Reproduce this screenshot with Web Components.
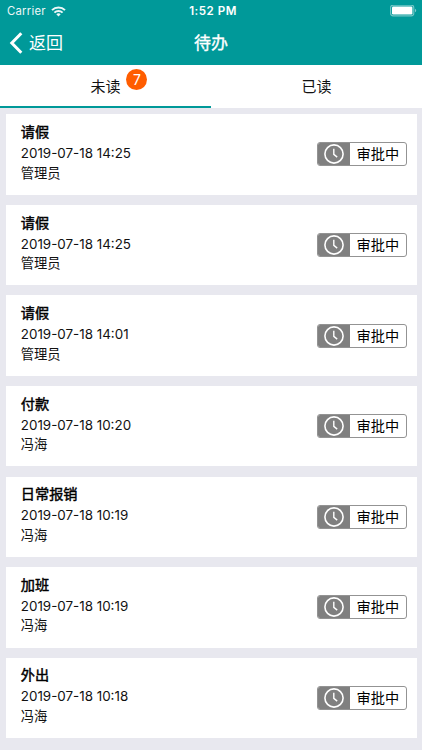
<!DOCTYPE html>
<html lang="zh-CN">
<head>
<meta charset="utf-8">
<meta name="viewport" content="width=device-width, initial-scale=1">
<title>待办</title>
<style>
  body {
    margin: 0;
    background: #e8e8ef;
    font-family: Inter, "Noto Sans CJK SC", sans-serif;
    color: #111;
    overflow: hidden;
  }
</style>
</head>
<body>
<todo-app>
  <status-bar carrier="Carrier" time="1:52 PM"></status-bar>
  <nav-bar back="返回">待办</nav-bar>
  <tab-bar>
    <tab-item active badge="7">未读</tab-item>
    <tab-item>已读</tab-item>
  </tab-bar>
  <todo-list></todo-list>
</todo-app>

<script>
(function() {
  const ITEMS = [
    { title: '请假', date: '2019-07-18 14:25', user: '管理员' },
    { title: '请假', date: '2019-07-18 14:25', user: '管理员' },
    { title: '请假', date: '2019-07-18 14:01', user: '管理员' },
    { title: '付款', date: '2019-07-18 10:20', user: '冯海' },
    { title: '日常报销', date: '2019-07-18 10:19', user: '冯海' },
    { title: '加班', date: '2019-07-18 10:19', user: '冯海' },
    { title: '外出', date: '2019-07-18 10:18', user: '冯海' },
  ];

  class BaseElement extends HTMLElement {
    constructor() {
      super();
      this.attachShadow({ mode: 'open' });
    }

    connectedCallback() {
      this.shadowRoot.innerHTML = this.template();
    }
  }

  class TodoApp extends BaseElement {
    template() {
      return `
        <style>
          :host { display: flex; flex-direction: column; height: 750px; overflow: hidden; }
        </style>
        <slot></slot>
      `;
    }
  }

  class StatusBar extends BaseElement {
    template() {
      return `
        <style>
          :host {
            display: grid;
            grid-template-columns: 1fr auto 1fr;
            align-items: center;
            box-sizing: border-box;
            height: 22px;
            padding: 0 5px 0 7px;
            background: #099;
            color: #fff;
            font-size: 11.3px;
            line-height: 22px;
          }
          .left { display: flex; align-items: center; gap: 5px; opacity: .93; letter-spacing: .25px; }
          .time { font-weight: 600; font-size: 11.6px; letter-spacing: .5px; padding-left: 2px; }
          .battery { justify-self: end; }
          svg { display: block; }
        </style>
        <div class="left">
          <span>${this.getAttribute('carrier')}</span>
          <svg width="15" height="11" viewBox="0 0 15 11" fill="none" stroke="#fff" stroke-width="2">
            <path d="M1 4.1a9.2 9.2 0 0 1 13 0"/>
            <path d="M3.4 6.6a5.8 5.8 0 0 1 8.2 0"/>
            <path d="M7.5 10.6 5.3 8.3a3.1 3.1 0 0 1 4.4 0z" fill="#fff" stroke="none"/>
          </svg>
        </div>
        <div class="time">${this.getAttribute('time')}</div>
        <svg class="battery" width="27" height="12" viewBox="0 0 27 12">
          <rect x=".6" y=".1" width="23.2" height="10.8" rx="2.6" fill="none" stroke="#fff" stroke-opacity=".45" stroke-width="1.1"/>
          <rect x="2" y="1.5" width="20.4" height="8" rx="1.2" fill="#fff"/>
          <path d="M25 3.7a2 2 0 0 1 0 3.6z" fill="#fff" fill-opacity=".5"/>
        </svg>
      `;
    }
  }

  class NavBar extends BaseElement {
    template() {
      return `
        <style>
          :host {
            display: grid;
            grid-template-columns: 1fr auto 1fr;
            align-items: center;
            box-sizing: border-box;
            height: 43px;
            padding: 0 9px 2px;
            background: #099;
            color: #fff;
            font-size: 17px;
            line-height: 24px;
          }
          .back { display: flex; align-items: center; gap: 6px; font-weight: 400; }
          .title { font-weight: 400; -webkit-text-stroke: .35px #fff; }
          svg { display: block; }
        </style>
        <div class="back">
          <svg width="14" height="22" viewBox="0 0 14 22" fill="none" stroke="#fff" stroke-width="3">
            <path d="M12.3 1.2 2.8 11l9.5 9.8"/>
          </svg>
          <span>${this.getAttribute('back')}</span>
        </div>
        <div class="title"><slot></slot></div>
      `;
    }
  }

  class TabBar extends BaseElement {
    template() {
      return `
        <style>
          :host { display: grid; grid-template-columns: 1fr 1fr; height: 43px; background: #fff; }
        </style>
        <slot></slot>
      `;
    }
  }

  class TabItem extends BaseElement {
    template() {
      const badge = this.getAttribute('badge');
      return `
        <style>
          :host {
            display: flex;
            align-items: center;
            justify-content: center;
            box-sizing: border-box;
            border-bottom: 2px solid transparent;
            padding-top: 3px;
            font-size: 15px;
            line-height: 22px;
          }
          :host([active]) { border-color: #099; }
          .label { position: relative; }
          .badge {
            position: absolute;
            left: 36px;
            top: -7px;
            width: 21px;
            height: 21px;
            border-radius: 50%;
            background: #ff5d00;
            color: #fff;
            font-size: 14px;
            line-height: 21px;
            text-align: center;
          }
        </style>
        <div class="label"><slot></slot>${badge ? `<span class="badge">${badge}</span>` : ''}</div>
      `;
    }
  }

  class StatusTag extends BaseElement {
    template() {
      return `
        <style>
          :host {
            display: flex;
            box-sizing: border-box;
            width: 90px;
            height: 24px;
            border: 1px solid #939393;
            border-radius: 3px;
            overflow: hidden;
            font-size: 14.2px;
            line-height: 22px;
            color: #000;
          }
          .icon {
            display: flex;
            align-items: center;
            justify-content: center;
            width: 32px;
            background: #808080;
          }
          .text { flex: 1; text-align: center; white-space: nowrap; }
        </style>
        <div class="icon">
          <svg width="22" height="22" viewBox="0 0 22 22" fill="none" stroke="#fff">
            <circle cx="11" cy="11" r="9.1" stroke-width="1.6"/>
            <path d="M10.8 5.8v5.6l3.4 2.7" stroke-width="1.4"/>
          </svg>
        </div>
        <div class="text"><slot></slot></div>
      `;
    }
  }

  class TodoCard extends BaseElement {
    template() {
      return `
        <style>
          :host {
            display: flex;
            align-items: center;
            justify-content: space-between;
            box-sizing: border-box;
            height: 80.4px;
            padding: 0 10px 0 15.2px;
            background: #fff;
          }
          .info { display: flex; flex-direction: column; height: 63px; font-size: 13.3px; line-height: 20px; }
          .title { height: 20px; font-size: 14.2px; line-height: 18px; -webkit-text-stroke: .45px #000; color: #000; }
          .date { height: 19.6px; font-size: 13.4px; }
        </style>
        <div class="info">
          <div class="title"><slot></slot></div>
          <div class="date">${this.getAttribute('date')}</div>
          <div class="user">${this.getAttribute('user')}</div>
        </div>
        <status-tag>审批中</status-tag>
      `;
    }
  }

  class TodoList extends BaseElement {
    template() {
      return `
        <style>
          :host {
            display: flex;
            flex-direction: column;
            gap: 10.2px;
            padding: 6.3px 5.2px 0 5.6px;
          }
        </style>
        ${ITEMS.map(item => `<todo-card date="${item.date}" user="${item.user}">${item.title}</todo-card>`).join('')}
      `;
    }
  }

  customElements.define('todo-app', TodoApp);
  customElements.define('status-bar', StatusBar);
  customElements.define('nav-bar', NavBar);
  customElements.define('tab-bar', TabBar);
  customElements.define('tab-item', TabItem);
  customElements.define('status-tag', StatusTag);
  customElements.define('todo-card', TodoCard);
  customElements.define('todo-list', TodoList);
})();
</script>
</body>
</html>
